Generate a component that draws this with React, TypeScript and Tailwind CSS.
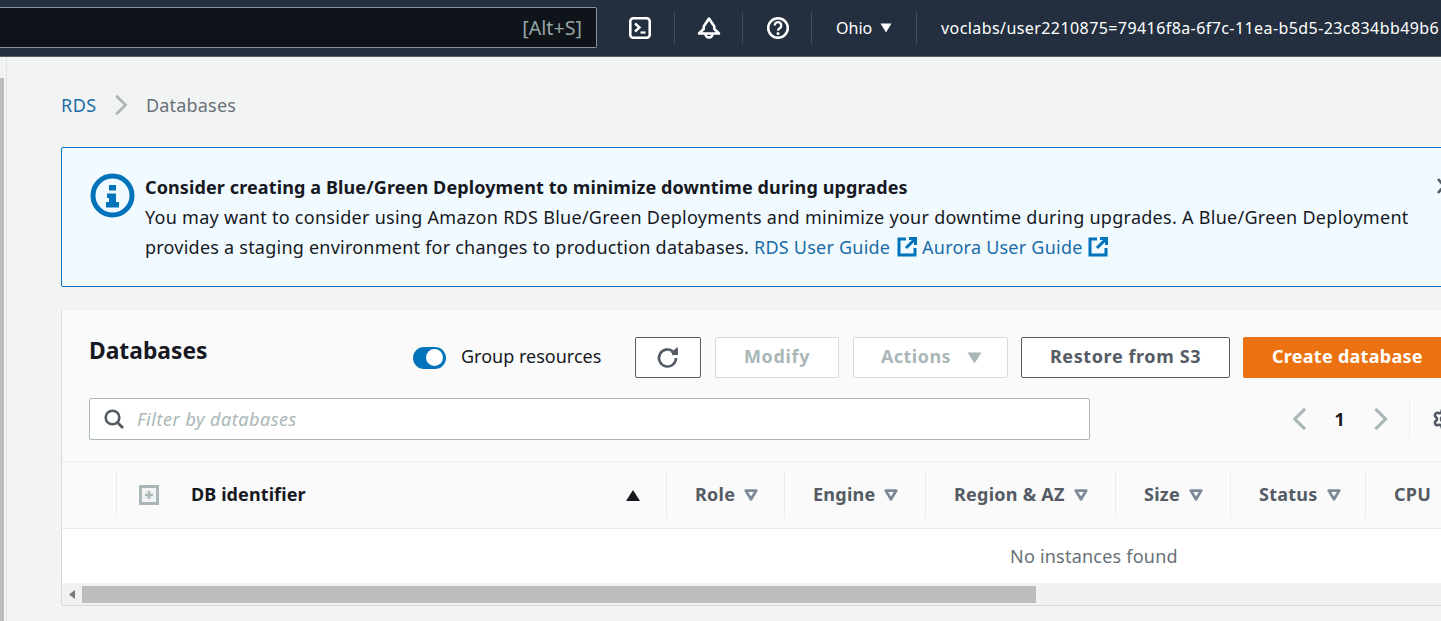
import React from "react";
import { Settings } from "lucide-react";

const font = "font-['Noto_Sans','Open_Sans',sans-serif]";

function Caret({ className = "" }: { className?: string }) {
  return (
    <svg width="14" height="12" viewBox="0 0 14 12" className={className}>
      <path d="M1.8 1.6h10.4L7 10.2z" fill="none" stroke="#7d8998" strokeWidth="2.8" strokeLinejoin="round" />
    </svg>
  );
}

function ExternalIcon({ className = "" }: { className?: string }) {
  return (
    <svg width="20" height="20" viewBox="0 0 20 20" className={`inline-block align-[-3px] ${className}`}>
      <path d="M9 2H2v16h16v-7" fill="none" stroke="#0073bb" strokeWidth="3" />
      <path d="M12 1.5h6.5V8M18 2l-9 9" fill="none" stroke="#0073bb" strokeWidth="3" />
    </svg>
  );
}

function Chevron({ dir, size = 22, color = "#aab7b8" }: { dir: "l" | "r"; size?: number; color?: string }) {
  return (
    <svg width={size * 0.6} height={size} viewBox="0 0 12 20">
      <path d={dir === "r" ? "M2 1.5 10.5 10 2 18.5" : "M10 1.5 1.5 10 10 18.5"} fill="none" stroke={color} strokeWidth="2.6" />
    </svg>
  );
}

function Column({ label, width, caret = true }: { label: string; width: string; caret?: boolean }) {
  return (
    <div className={`flex items-center h-[46px] border-l border-[#eaeded] pl-[28px] gap-[9px] shrink-0 ${width}`}>
      <span className="font-bold text-[#545b64] text-[18px] tracking-[0.25px] whitespace-nowrap pb-[2px]">{label}</span>
      {caret && <Caret />}
    </div>
  );
}

export default function App() {
  return (
    <div className={`${font} w-[1441px] h-[621px] overflow-hidden bg-[#f2f3f3] text-[18px] text-[#16191f]`}>
      <header className="h-[57px] bg-[#232f3e] border-b border-[#545b64] flex items-center text-white shrink-0">
        <div className="w-[597px] h-[41px] mb-[1px] bg-[#0f141a] border-y border-r border-[#879596] rounded-r-[2px] flex items-center justify-end pr-[14px] text-[#95a5a6] text-[19.7px] shrink-0">
          [Alt+S]
        </div>
        <div className="w-[85px] flex justify-end pr-[23px] shrink-0 ml-[-8px]">
          <svg width="22" height="22" viewBox="0 0 22 22">
            <rect x="1.3" y="1.3" width="19.4" height="19.4" rx="3" fill="none" stroke="white" strokeWidth="2.6" />
            <path d="M6 6.5 10.5 10.5 6 14.5" fill="none" stroke="white" strokeWidth="2.4" />
            <path d="M11.5 15.5h5" stroke="white" strokeWidth="2.2" />
          </svg>
        </div>
        <div className="h-[32px] border-l border-[#414d5c] w-[68px] flex items-center justify-center shrink-0">
          <svg width="24" height="24" viewBox="0 0 24 24">
            <path d="M12 2.5 17.3 10.5 17.3 13 22 17.5H2L6.7 13V10.5z" fill="none" stroke="white" strokeWidth="2.6" strokeLinejoin="round" />
            <path d="M8.5 18a3.5 3.5 0 0 0 7 0" fill="none" stroke="white" strokeWidth="2.6" />
          </svg>
        </div>
        <div className="h-[32px] border-l border-[#414d5c] w-[69px] flex items-center justify-center shrink-0">
          <svg width="24" height="24" viewBox="0 0 24 24" className="ml-[2px]">
            <circle cx="12" cy="12" r="9.8" fill="none" stroke="white" strokeWidth="2.5" />
            <path d="M8.7 9.4a3.3 3.3 0 1 1 5 2.8c-1.1.7-1.7 1.3-1.7 2.6" fill="none" stroke="white" strokeWidth="2.3" />
            <circle cx="12" cy="17.5" r="1.5" fill="white" />
          </svg>
        </div>
        <div className="h-[32px] border-l border-[#414d5c] w-[105px] flex items-center pl-[24px] gap-[8px] shrink-0 text-[16px]">
          <span>Ohio</span>
          <svg width="12" height="10" viewBox="0 0 12 10"><path d="M0.5 0.5h11L6 9.5z" fill="white" /></svg>
        </div>
        <div className="h-[32px] border-l border-[#414d5c] pl-[24px] flex items-center whitespace-nowrap text-[16px] tracking-[0.42px] shrink-0">
          voclabs/user2210875=79416f8a-6f7c-11ea-b5d5-23c834bb49b6
        </div>
      </header>

      <div className="flex h-[564px]">
        <div className="w-[7px] shrink-0 border-r border-[#e1e4e4] pt-[21px]">
          <div className="w-[4px] h-[543px] bg-[#bdbdbd]" />
        </div>
        <main className="w-[1600px] shrink-0 pl-[54px] pt-[36px]">
          <nav className="flex items-center h-[24px] text-[18px] tracking-[0.2px]">
            <span className="text-[#1b6ca8] tracking-[0.5px]">RDS</span>
            <span className="ml-[17px] mr-[19px] flex"><Chevron dir="r" /></span>
            <span className="text-[#687078]">Databases</span>
          </nav>

          <section className="mt-[30px] w-[1500px] h-[140px] bg-[#f1faff] border border-[#0073bb] rounded-[2px] flex pl-[28px] pt-[24px] relative">
            <svg width="45" height="45" viewBox="0 0 45 45" className="shrink-0 mt-[1px]">
              <circle cx="22.5" cy="22.5" r="19.5" fill="none" stroke="#0073bb" strokeWidth="5" />
              <rect x="19" y="12" width="7" height="5.5" fill="#0073bb" />
              <path d="M17 20.5h9V29h3v5.5H16V29h3v-4h-2z" fill="#0073bb" />
            </svg>
            <div className="ml-[10px] w-[1290px] text-[18px] leading-[30px]">
              <div className="font-bold tracking-[0.115px] whitespace-nowrap">Consider creating a Blue/Green Deployment to minimize downtime during upgrades</div>
              <div className="whitespace-nowrap tracking-[0.28px]">
                You may want to consider using Amazon RDS Blue/Green Deployments and minimize your downtime during upgrades. A Blue/Green Deployment
              </div>
              <div className="whitespace-nowrap tracking-[0.23px]">
                <span>provides a staging environment for changes to production databases.</span>{" "}
                <span className="text-[#1b6ca8]">RDS User Guide</span> <ExternalIcon className="ml-[2px]" />{" "}
                <span className="text-[#1b6ca8]">Aurora User Guide</span> <ExternalIcon />
              </div>
            </div>
            <svg width="16" height="18" viewBox="0 0 16 18" className="absolute left-[1374px] top-[29px]">
              <path d="M2 2 14 16M14 2 2 16" stroke="#545b64" strokeWidth="2.6" fill="none" />
            </svg>
          </section>

          <section className="mt-[22px] w-[1500px] h-[297px] bg-white border border-[#d5dbdb] border-t-[#eaeded] rounded-[2px] flex flex-col">
            <div className="h-[152px] bg-[#fafafa] border-b border-[#eaeded] px-[27px] pt-[27px] shrink-0">
              <div className="flex items-start h-[41px]">
                <h1 className="font-bold text-[22.8px] leading-[28px] w-[324px] shrink-0">Databases</h1>
                <div className="flex items-center h-[41px] shrink-0">
                  <span className="w-[33px] h-[22px] rounded-full bg-[#0073bb] flex items-center justify-end pr-[3px]">
                    <span className="w-[17px] h-[17px] rounded-full bg-white" />
                  </span>
                  <span className="ml-[15px] w-[174px] text-[18px] pb-[2px] whitespace-nowrap">Group resources</span>
                </div>
                <div className="flex gap-[14px] shrink-0">
                  <button className="w-[66px] h-[41px] bg-white border border-[#545b64] rounded-[2px] flex items-center justify-center">
                    <svg width="24" height="24" viewBox="0 0 24 24">
                      <path d="M20 12a8.5 8.5 0 1 1-3-6.5" fill="none" stroke="#545b64" strokeWidth="2.6" />
                      <path d="M14.5 7h7V1z" fill="#545b64" />
                      <path d="M16 8h5V2.5" fill="none" stroke="#545b64" strokeWidth="2" />
                    </svg>
                  </button>
                  <button className="w-[124px] h-[41px] pb-[2px] bg-white border border-[#d5dbdb] rounded-[2px] font-bold text-[#aab7b8] text-[18px] tracking-[0.67px]">Modify</button>
                  <button className="w-[155px] h-[41px] pb-[2px] pl-[2px] bg-white border border-[#d5dbdb] rounded-[2px] font-bold text-[#aab7b8] text-[18px] tracking-[0.45px] flex items-center justify-center gap-[16px]">
                    Actions
                    <svg width="15" height="12" viewBox="0 0 15 12" className="mt-[2px]"><path d="M0.5 0.5h14L7.5 11.5z" fill="#aab7b8" /></svg>
                  </button>
                  <button className="w-[209px] h-[41px] pb-[2px] -ml-[1px] bg-white border border-[#545b64] rounded-[2px] font-bold text-[#545b64] text-[18px] tracking-[0.6px]">Restore from S3</button>
                  <button className="w-[240px] h-[41px] pb-[2px] -ml-[1px] bg-[#ec7211] rounded-[2px] font-bold text-white text-[18px] tracking-[0.27px] text-left pl-[29px]">Create database</button>
                </div>
              </div>
              <div className="flex items-center mt-[20px] h-[42px]">
                <div className="w-[1001px] h-[42px] bg-white border border-[#aab7b8] rounded-[2px] flex items-center pl-[13px] gap-[12px] shrink-0">
                  <svg width="22" height="22" viewBox="0 0 22 22">
                    <circle cx="9.5" cy="9.5" r="6.8" fill="none" stroke="#545b64" strokeWidth="2.6" />
                    <path d="M14.5 14.5 20 20" stroke="#545b64" strokeWidth="2.8" />
                  </svg>
                  <span className="italic text-[#aab7b8] text-[18px] tracking-[0.53px]">Filter by databases</span>
                </div>
                <div className="ml-[203px] flex items-center shrink-0"><Chevron dir="l" size={24} /></div>
                <span className="ml-[27px] font-bold text-[18px] w-[10px] shrink-0">1</span>
                <div className="ml-[29px] flex items-center shrink-0"><Chevron dir="r" size={24} /></div>
                <div className="ml-[21px] h-[38px] border-l border-[#eaeded] pl-[22px] flex items-center shrink-0">
                  <Settings size={24} strokeWidth={2.6} color="#545b64" />
                </div>
              </div>
            </div>

            <div className="h-[67px] bg-[#fafafa] border-b border-[#eaeded] flex items-center shrink-0">
              <div className="w-[54px] shrink-0" />
              <div className="w-[550px] h-[46px] border-l border-[#eaeded] flex items-center shrink-0">
                <span className="w-[20px] h-[20px] ml-[22px] border-[3px] border-[#aab7b8] bg-[#f2f3f3] flex items-center justify-center shrink-0">
                  <svg width="10" height="10" viewBox="0 0 10 10"><path d="M5 1v8M1 5h8" stroke="#aab7b8" strokeWidth="2.4" /></svg>
                </span>
                <span className="ml-[32px] font-bold text-[18px] tracking-[0.1px] w-[435px] shrink-0 pb-[2px]">DB identifier</span>
                <svg width="14" height="11" viewBox="0 0 14 11"><path d="M7 0 14 11H0z" fill="#16191f" /></svg>
              </div>
              <Column label="Role" width="w-[118px]" />
              <Column label="Engine" width="w-[141px]" />
              <Column label="Region & AZ" width="w-[190px]" />
              <Column label="Size" width="w-[115px]" />
              <Column label="Status" width="w-[135px]" />
              <Column label="CPU" width="w-[140px]" caret={false} />
            </div>

            <div className="h-[54px] flex items-center shrink-0 text-[#687078] text-[18px] tracking-[0.22px] pl-[948px]">No instances found</div>

            <div className="flex-1 bg-[#f1f1f1] flex items-center">
              <div className="w-[20px] flex justify-center shrink-0">
                <svg width="6" height="9" viewBox="0 0 6 9"><path d="M6 0v9L0 4.5z" fill="#7a7a7a" /></svg>
              </div>
              <div className="w-[954px] h-[17px] bg-[#bdbdbd] shrink-0" />
            </div>
          </section>
        </main>
      </div>
    </div>
  );
}
